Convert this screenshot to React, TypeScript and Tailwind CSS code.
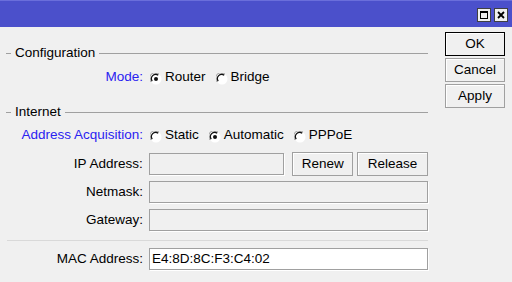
import React from "react";

function Radio({ checked }: { checked?: boolean }) {
  return (
    <svg width="12" height="12" viewBox="0 0 12 12" className="shrink-0 translate-y-[2px]">
      <circle cx="6" cy="6" r="5.5" fill="#ffffff" />
      <path d="M1.2 9 A5.3 5.3 0 0 1 9 1.2" stroke="#9a9a9a" strokeWidth="1" fill="none" />
      <path d="M2.2 8.2 A4.3 4.3 0 0 1 8.2 2.2" stroke="#111" strokeWidth="1.3" fill="none" />
      {checked && <circle cx="6" cy="6" r="2" fill="#111" />}
    </svg>
  );
}

function GroupHeader({ title, className }: { title: string; className?: string }) {
  return (
    <div className={"flex items-center h-[14px] " + (className ?? "")}>
      <div className="w-[5px] h-px bg-[#a0a0a0]" />
      <span className="px-[4px] leading-[14px] text-[#000]">{title}</span>
      <div className="flex-1 h-px bg-[#a0a0a0]" />
    </div>
  );
}

function Field({ className }: { className?: string }) {
  return (
    <div
      className={
        "h-[22px] border border-[#a0a0a0] shadow-[1px_1px_0_#ffffff] bg-[#f0f0f0] " + (className ?? "")
      }
    />
  );
}

function Btn({ label, className, def }: { label: string; className?: string; def?: boolean }) {
  return (
    <div
      className={
        "flex items-center justify-center bg-[#f0f0f0] border shadow-[inset_1px_1px_0_#ffffff] " +
        (def ? "border-[#000] " : "border-[#a0a0a0] ") +
        (className ?? "")
      }
    >
      {label}
    </div>
  );
}

export default function App() {
  return (
    <div
      className="w-[512px] h-[282px] bg-[#f0f0f0] text-[13.5px] text-black overflow-hidden"
      style={{ fontFamily: '"Liberation Sans", Arial, sans-serif' }}
    >
      <div className="h-[27px] bg-[#4b50cb] border-t border-[#6a6edb] flex items-center justify-end pr-[4px] gap-[3px]">
        <div className="w-[14px] h-[14px] bg-[#f0f0f0] border border-[#404040] flex items-center justify-center mt-[2px]">
          <div className="w-[8px] h-[8px] border border-black border-t-2" />
        </div>
        <div className="w-[14px] h-[14px] bg-[#f0f0f0] border border-[#404040] flex items-center justify-center mt-[2px]">
          <svg width="8" height="8" viewBox="0 0 8 8">
            <path d="M1 1 L7 7 M7 1 L1 7" stroke="#000" strokeWidth="1.8" />
          </svg>
        </div>
      </div>
      <div className="flex">
        <div className="w-[428px] pl-[6px]">
          <GroupHeader title="Configuration" className="mt-[19px]" />
          <div className="flex items-center h-[20px] mt-[7px]">
            <div className="w-[137px] text-right text-[#2a22f0]">Mode:</div>
            <div className="ml-[7px] flex items-center gap-[3px]">
              <Radio checked />
              <span>Router</span>
            </div>
            <div className="ml-[10px] flex items-center gap-[3px]">
              <Radio />
              <span>Bridge</span>
            </div>
          </div>
          <GroupHeader title="Internet" className="mt-[18px]" />
          <div className="flex items-center h-[20px] mt-[6px]">
            <div className="w-[137px] text-right text-[#2a22f0]">Address Acquisition:</div>
            <div className="ml-[7px] flex items-center gap-[3px]">
              <Radio />
              <span>Static</span>
            </div>
            <div className="ml-[10px] flex items-center gap-[3px]">
              <Radio checked />
              <span>Automatic</span>
            </div>
            <div className="ml-[10px] flex items-center gap-[3px]">
              <Radio />
              <span>PPPoE</span>
            </div>
          </div>
          <div className="flex items-center h-[24px] mt-[7px]">
            <div className="w-[137px] text-right">IP Address:</div>
            <Field className="ml-[6px] w-[136px]" />
            <Btn label="Renew" className="ml-[8px] w-[61px] h-[24px]" />
            <Btn label="Release" className="ml-[4px] w-[71px] h-[24px]" />
          </div>
          <div className="flex items-center h-[24px] mt-[4px]">
            <div className="w-[137px] text-right">Netmask:</div>
            <Field className="ml-[6px] flex-1" />
          </div>
          <div className="flex items-center h-[24px] mt-[4px]">
            <div className="w-[137px] text-right">Gateway:</div>
            <Field className="ml-[6px] flex-1" />
          </div>
          <div className="h-px bg-[#d9d9d9] mt-[8px] ml-px" />
          <div className="flex items-center h-[24px] mt-[6px]">
            <div className="w-[137px] text-right">MAC Address:</div>
            <div className="ml-[6px] flex-1 h-[22px] bg-white border border-[#a0a0a0] shadow-[1px_1px_0_#ffffff] flex items-center px-[2px]">
              E4:8D:8C:F3:C4:02
            </div>
          </div>
        </div>
        <div className="ml-[17px] mt-[5px] flex flex-col gap-[2px]">
          <Btn label="OK" def className="w-[60px] h-[24px]" />
          <Btn label="Cancel" className="w-[60px] h-[24px]" />
          <Btn label="Apply" className="w-[60px] h-[24px]" />
        </div>
      </div>
    </div>
  );
}
